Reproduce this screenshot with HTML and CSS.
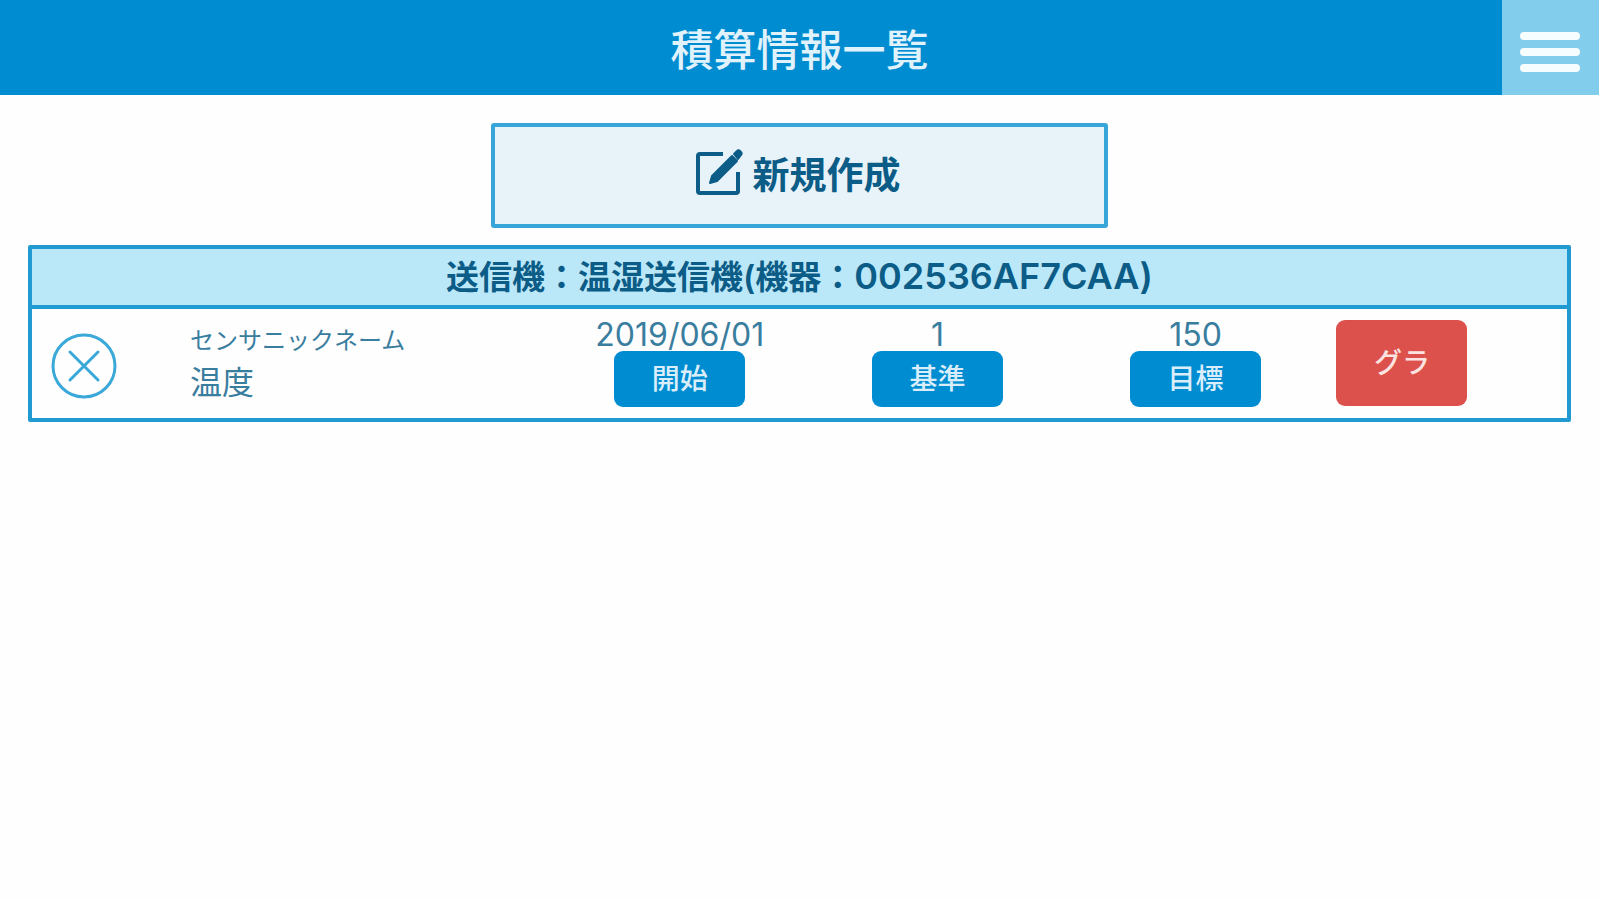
FILE: index.html
```
<!DOCTYPE html>
<html lang="ja">
<head>
    <meta charset="UTF-8">
    <meta name="viewport" content="width=device-width, initial-scale=1.0">
    <title>積算情報一覧</title>
    <link rel="stylesheet" href="styles.css">
</head>
<body>
    <header class="header">
        <h1>積算情報一覧</h1>
        <button class="menu-btn" type="button" aria-label="メニュー">
            <span class="menu-line"></span>
            <span class="menu-line"></span>
            <span class="menu-line"></span>
        </button>
    </header>

    <main class="content">
        <button class="create-btn" type="button">
            <svg class="create-icon" viewBox="0 0 48 48" aria-hidden="true">
                <path d="M28 5H5a2 2 0 0 0-2 2v35a2 2 0 0 0 2 2h36a2 2 0 0 0 2-2V23" fill="none" stroke="currentColor" stroke-width="4"/>
                <path d="M15 34l2-7L37 7l5 5-20 20zM39 5l3-3a2 2 0 0 1 3 0l1 1a2 2 0 0 1 0 3l-3 4z" fill="currentColor" stroke="currentColor" stroke-width="2" stroke-linejoin="round"/>
            </svg>
            新規作成
        </button>

        <table class="sensor-table">
            <colgroup>
                <col class="col-delete">
                <col class="col-name">
                <col class="col-value">
                <col class="col-value">
                <col class="col-value">
                <col class="col-graph">
            </colgroup>
            <thead>
                <tr>
                    <th colspan="6">送信機：温湿送信機(機器：<span class="device-id">002536AF7CAA)</span></th>
                </tr>
            </thead>
            <tbody>
                <tr>
                    <td class="delete-cell">
                        <button class="delete-btn" type="button" aria-label="削除">
                            <svg viewBox="0 0 66 66" aria-hidden="true">
                                <circle cx="33" cy="33" r="31"/>
                                <path d="M19 19l28 28M47 19L19 47"/>
                            </svg>
                        </button>
                    </td>
                    <td>
                        <div class="nickname">センサニックネーム</div>
                        <div class="sensor-type">温度</div>
                    </td>
                    <td class="value-cell">
                        <div class="value">2019/06/01</div>
                        <button class="btn" type="button">開始</button>
                    </td>
                    <td class="value-cell">
                        <div class="value">1</div>
                        <button class="btn" type="button">基準</button>
                    </td>
                    <td class="value-cell">
                        <div class="value">150</div>
                        <button class="btn" type="button">目標</button>
                    </td>
                    <td class="graph-cell">
                        <button class="btn btn-graph" type="button">グラ</button>
                    </td>
                </tr>
            </tbody>
        </table>
    </main>
</body>
</html>
```

FILE: styles.css
```
* {
    box-sizing: border-box;
}
body {
    margin: 0;
    background: #fefefe;
    color: #0b5c86;
    font-family: Inter, "Noto Sans CJK JP", sans-serif;
}
button {
    font-family: inherit;
    cursor: pointer;
}
.header {
    display: grid;
    grid-template-columns: 97px 1fr 97px;
    height: 95px;
    background: #008cd0;
}
.header h1 {
    grid-column: 2;
    align-self: center;
    margin: 0;
    padding-top: 4px;
    color: #e0f2fb;
    font-size: 43px;
    font-weight: 500;
    line-height: 64px;
    text-align: center;
}
.menu-btn {
    display: flex;
    flex-direction: column;
    align-items: center;
    justify-content: center;
    gap: 8px;
    padding: 8px 2px 0 0;
    border: none;
    background: #82cdeb;
}
.menu-line {
    width: 60px;
    height: 8px;
    border-radius: 4px;
    background: #f5fdff;
}
.content {
    padding: 28px 28px 0;
}
.create-btn {
    display: flex;
    align-items: center;
    justify-content: center;
    gap: 10px;
    width: 40%;
    height: 105px;
    margin: 0 auto 17px;
    padding: 0 4px 6px 0;
    border: 4px solid #37a5d7;
    border-radius: 3px;
    background: #e8f3f9;
    color: #0b5c86;
    font-size: 37px;
    font-weight: 700;
}
.create-icon {
    width: 48px;
    height: 48px;
}
.sensor-table {
    width: 100%;
    table-layout: fixed;
    border: 4px solid #209ad0;
    border-radius: 2px;
    border-spacing: 0;
}
.col-delete {
    width: 10.3%;
}
.col-name {
    width: 23.5%;
}
.col-value {
    width: 16.8%;
}
.sensor-table th {
    height: 60px;
    padding: 0;
    border-bottom: 4px solid #209ad0;
    background: #bbe8f9;
    font-size: 33px;
    font-weight: 600;
    line-height: 56px;
}
.device-id {
    font-size: 36px;
    line-height: 40px;
}
.sensor-table td {
    height: 109px;
    padding: 0 0 2px;
    color: #397d9f;
    vertical-align: middle;
}
.sensor-table .delete-cell {
    padding: 4px 0 0 19px;
}
.delete-btn {
    display: block;
    width: 66px;
    height: 66px;
    padding: 0;
    border: none;
    background: none;
}
.delete-btn svg {
    display: block;
    fill: none;
    stroke: #3aa8d9;
    stroke-width: 3;
    stroke-linecap: round;
}
.nickname {
    font-size: 24px;
    line-height: 40px;
}
.sensor-type {
    font-size: 32px;
    line-height: 44px;
}
.value-cell {
    text-align: center;
}
.value {
    font-size: 32px;
    line-height: 32px;
}
.btn {
    width: 131px;
    height: 56px;
    padding: 0;
    border: none;
    border-radius: 9px;
    background: #008cd0;
    color: #d9eefa;
    font-size: 28px;
    font-weight: 500;
    line-height: 56px;
}
.sensor-table .graph-cell {
    padding-left: 12px;
}
.btn-graph {
    height: 86px;
    background: #dc514b;
    color: #fbe3e1;
}
```
